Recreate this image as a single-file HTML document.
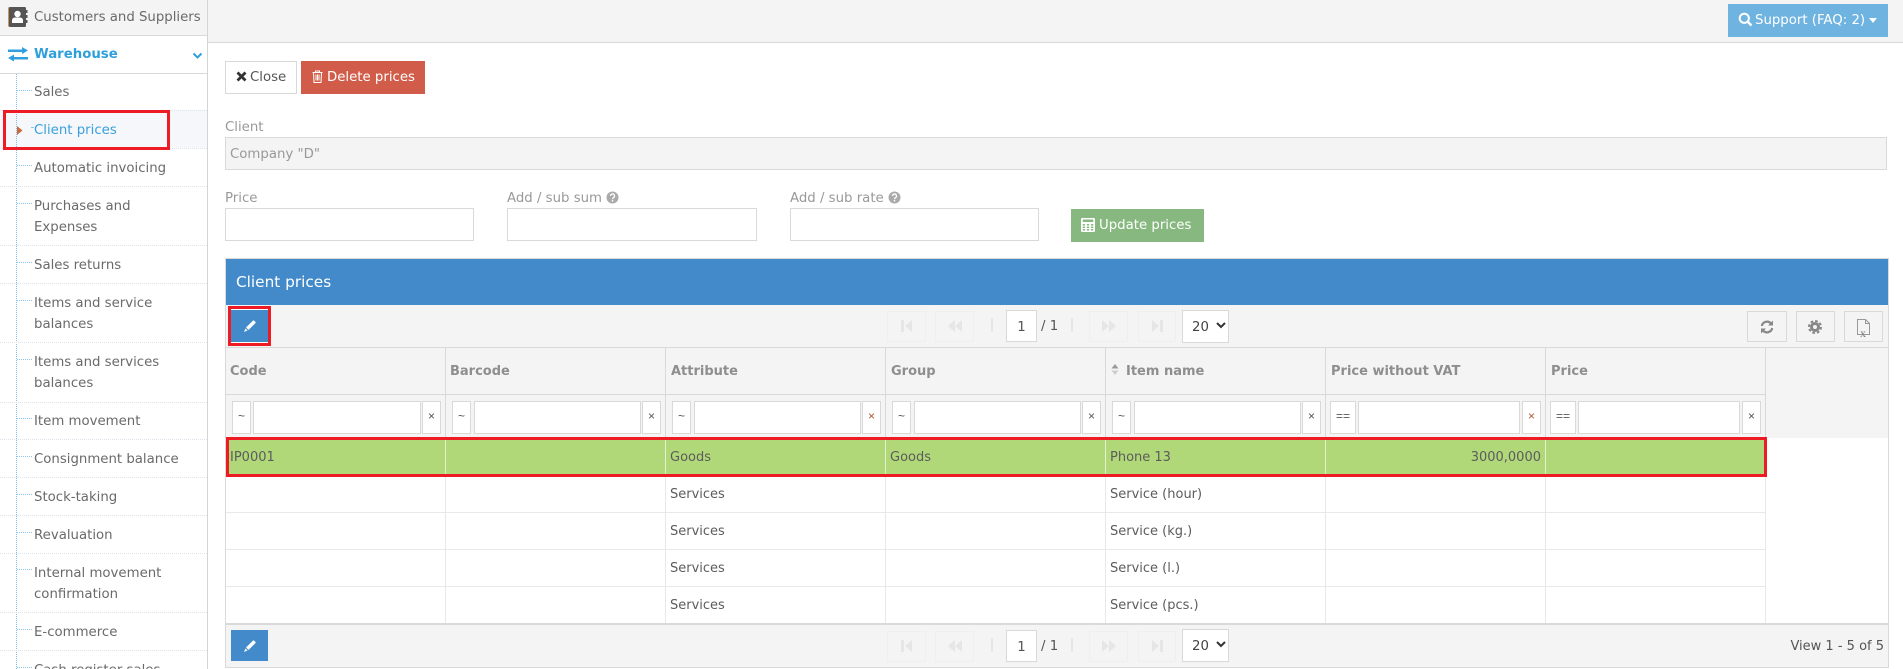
<!DOCTYPE html>
<html><head><meta charset="utf-8"><title>Client prices</title>
<style>
html,body{margin:0;padding:0;width:1903px;height:669px;overflow:hidden;background:#fff}
body{font-family:"DejaVu Sans","Liberation Sans",sans-serif;font-size:13.3px;color:#666;position:relative}
.a,.t,.n,.b,.tick,.row{position:absolute}
.t{white-space:nowrap;line-height:20px;height:20px;margin-top:1px}
.n{left:34px;white-space:nowrap;line-height:20px;height:20px;color:#6a6a6a;margin-top:1px}
.tick{left:17px;width:15px;height:0;border-top:1px dotted #8fc4ea}
.row{left:0;width:207px;height:0;border-top:1px dotted #dde3ea}
.b{box-sizing:border-box;border:1px solid #ddd;background:#fff}
.g{background:#f4f4f4;border-color:#efefef}
.th{position:absolute;top:362px;white-space:nowrap;line-height:20px;font-weight:bold;color:#8e8e8e;font-size:13px}
.c{position:absolute;white-space:nowrap;line-height:20px;color:#5c5c5c;font-size:13px;margin-top:1px}
.f{position:absolute;box-sizing:border-box;top:401px;height:33px;background:#fff;border:1px solid #d9d9d9;text-align:center;line-height:29px;font-size:12px;color:#555;font-family:"Liberation Sans",sans-serif}
.v{position:absolute;width:1px;background:#e8e8e8}
.l{position:absolute;left:226px;width:1540px;height:1px;background:#e9e9e9}
svg{position:absolute;display:block}
</style></head><body>

<!-- sidebar -->
<div class="a" style="left:0;top:0;width:207px;height:35px;background:#f4f4f4"></div>
<div class="a" style="left:0;top:35px;width:207px;height:1px;background:#d9d9d9"></div>
<div class="a" style="left:0;top:73px;width:207px;height:1px;background:#d9d9d9"></div>
<div class="a" style="left:207px;top:0;width:1px;height:669px;background:#d4d4d4"></div>
<div class="a" style="left:0;top:110px;width:207px;height:38px;background:#f5f7fa"></div>
<svg style="left:8px;top:7px" width="20" height="20" viewBox="0 0 20 20"><rect x="0" y="0" width="18" height="20" rx="1.5" fill="#c9965f"/><rect x="1" y="0" width="17" height="20" rx="1.5" fill="#555"/><rect x="18" y="3" width="1.5" height="3" fill="#555"/><rect x="18" y="8" width="1.5" height="3" fill="#555"/><rect x="18" y="13" width="1.5" height="3" fill="#555"/><circle cx="9.5" cy="7" r="3.2" fill="#fff"/><path d="M4 16v-2.5c0-2 1.6-3 3-3h5c1.4 0 3 1 3 3V16z" fill="#fff"/></svg>
<div class="t" style="left:34px;top:7px;color:#6a6a6a">Customers and Suppliers</div>
<svg style="left:8px;top:47px" width="20" height="15" viewBox="0 0 20 15"><path d="M0 2.500h14V0l6 3.500-6 3.500V5H0zM20 10H6V7.500L0 11l6 3.500V12.500h14z" fill="#2f9fe0"/></svg>
<div class="t" style="left:34px;top:44px;color:#2f9fdc;font-weight:bold">Warehouse</div>
<svg style="left:192px;top:52px" width="11" height="8" viewBox="0 0 11 8"><path d="M1.500 1.500L5.500 5.500 9.500 1.500" fill="none" stroke="#2f9fdc" stroke-width="2"/></svg>

<div class="a" style="left:16px;top:74px;width:0;height:595px;border-left:1px dotted #7fbbe8"></div>
<div class="tick" style="top:90px"></div>
<div class="tick" style="top:127px;left:31px;width:2px"></div>
<div class="tick" style="top:165px"></div><div class="tick" style="top:203px"></div>
<div class="tick" style="top:262px"></div><div class="tick" style="top:300px"></div>
<div class="tick" style="top:359px"></div><div class="tick" style="top:418px"></div>
<div class="tick" style="top:456px"></div><div class="tick" style="top:494px"></div>
<div class="tick" style="top:532px"></div><div class="tick" style="top:569px"></div>
<div class="tick" style="top:629px"></div><div class="tick" style="top:667px"></div>
<div class="row" style="top:110px"></div><div class="row" style="top:148px"></div>
<div class="row" style="top:186px"></div><div class="row" style="top:245px"></div>
<div class="row" style="top:283px"></div><div class="row" style="top:342px"></div>
<div class="row" style="top:402px"></div><div class="row" style="top:439px"></div>
<div class="row" style="top:477px"></div><div class="row" style="top:515px"></div>
<div class="row" style="top:553px"></div><div class="row" style="top:612px"></div>
<div class="row" style="top:650px"></div>

<div class="n" style="top:82px">Sales</div>
<div class="n" style="top:120px;color:#3a9fdc">Client prices</div>
<div class="n" style="top:158px">Automatic invoicing</div>
<div class="n" style="top:196px">Purchases and</div>
<div class="n" style="top:217px">Expenses</div>
<div class="n" style="top:255px">Sales returns</div>
<div class="n" style="top:293px">Items and service</div>
<div class="n" style="top:314px">balances</div>
<div class="n" style="top:352px">Items and services</div>
<div class="n" style="top:373px">balances</div>
<div class="n" style="top:411px">Item movement</div>
<div class="n" style="top:449px">Consignment balance</div>
<div class="n" style="top:487px">Stock-taking</div>
<div class="n" style="top:525px">Revaluation</div>
<div class="n" style="top:563px">Internal movement</div>
<div class="n" style="top:584px">confirmation</div>
<div class="n" style="top:622px">E-commerce</div>
<div class="n" style="top:660px">Cash register sales</div>
<svg style="left:17px;top:126px" width="6" height="9" viewBox="0 0 6 9"><path d="M0 0L5.500 4.500 0 9z" fill="#c8693f"/></svg>
<div class="a" style="left:3px;top:110px;width:161px;height:34px;border:3px solid #ed1c24"></div>

<!-- top bar -->
<div class="a" style="left:208px;top:0;width:1695px;height:42px;background:#f4f4f4;border-bottom:1px solid #d9d9d9"></div>
<div class="a" style="left:1728px;top:4px;width:160px;height:33px;background:#6fb3e0"></div>
<svg style="left:1738px;top:12px" width="15" height="15" viewBox="0 0 15 15"><circle cx="6.300" cy="6.300" r="4.600" fill="none" stroke="#fff" stroke-width="2"/><path d="M9.500 9.500L13.500 13.500" stroke="#fff" stroke-width="2.400"/></svg>
<div class="t" style="left:1755px;top:10px;color:#fff">Support (FAQ: 2)</div>
<svg style="left:1869px;top:18px" width="8" height="5" viewBox="0 0 8 5"><path d="M0 0h8L4 5z" fill="#fff"/></svg>

<!-- buttons -->
<div class="b" style="left:225px;top:61px;width:72px;height:33px;border-color:#d9d9d9"></div>
<svg style="left:236px;top:71px" width="11" height="11" viewBox="0 0 11 11"><path d="M1.500 1.500L9.500 9.500M9.500 1.500L1.500 9.500" stroke="#333" stroke-width="2.800"/></svg>
<div class="t" style="left:250px;top:67px;color:#555">Close</div>
<div class="a" style="left:301px;top:61px;width:124px;height:33px;background:#d25c4a"></div>
<svg style="left:312px;top:70px" width="11" height="13" viewBox="0 0 11 13"><path d="M0.500 2.500h10M3.500 2.500V1h4v1.500M1.500 2.500l.5 10h7l.5-10M4 4.500v6M5.500 4.500v6M7 4.500v6" fill="none" stroke="#fff" stroke-width="1"/></svg>
<div class="t" style="left:327px;top:67px;color:#fff">Delete prices</div>

<!-- form -->
<div class="t" style="left:225px;top:117px;color:#999">Client</div>
<div class="b" style="left:225px;top:137px;width:1662px;height:33px;background:#f4f4f4;border-color:#d9d9d9"></div>
<div class="t" style="left:230px;top:144px;color:#999">Company "D"</div>
<div class="t" style="left:225px;top:188px;color:#999">Price</div>
<div class="b" style="left:225px;top:208px;width:249px;height:33px;border-color:#d9d9d9"></div>
<div class="t" style="left:507px;top:188px;color:#999">Add / sub sum</div>
<svg style="left:606px;top:191px" width="13" height="13" viewBox="0 0 13 13"><circle cx="6.500" cy="6.500" r="6" fill="#aaa"/><path d="M4.500 5a2 2 0 1 1 3 1.700c-.7.400-1 .8-1 1.500" fill="none" stroke="#fff" stroke-width="1.300"/><rect x="5.800" y="9" width="1.400" height="1.500" fill="#fff"/></svg>
<div class="b" style="left:507px;top:208px;width:250px;height:33px;border-color:#d9d9d9"></div>
<div class="t" style="left:790px;top:188px;color:#999">Add / sub rate</div>
<svg style="left:888px;top:191px" width="13" height="13" viewBox="0 0 13 13"><circle cx="6.500" cy="6.500" r="6" fill="#aaa"/><path d="M4.500 5a2 2 0 1 1 3 1.700c-.7.400-1 .8-1 1.500" fill="none" stroke="#fff" stroke-width="1.300"/><rect x="5.800" y="9" width="1.400" height="1.500" fill="#fff"/></svg>
<div class="b" style="left:790px;top:208px;width:249px;height:33px;border-color:#d9d9d9"></div>
<div class="a" style="left:1071px;top:209px;width:133px;height:33px;background:#86b87f"></div>
<svg style="left:1081px;top:218px" width="14" height="14" viewBox="0 0 12 14" preserveAspectRatio="none"><rect x="0" y="0" width="12" height="14" rx="1" fill="#fff"/><rect x="1.500" y="1.500" width="9" height="2.500" fill="#86b87f"/><path d="M1.500 6h2v1.500h-2zM5 6h2v1.500H5zM8.500 6h2v1.500h-2zM1.500 8.500h2V10h-2zM5 8.500h2V10H5zM8.500 8.500h2V10h-2zM1.500 11h2v1.500h-2zM5 11h2v1.500H5zM8.500 11h2v1.500h-2z" fill="#86b87f"/></svg>
<div class="t" style="left:1099px;top:215px;color:#fff">Update prices</div>

<!-- panel -->
<div class="a" style="box-sizing:border-box;left:225px;top:258px;width:1664px;height:410px;border:1px solid #d9d9d9;background:#fff"></div>
<div class="a" style="left:226px;top:259px;width:1662px;height:46px;background:#428aca"></div>
<div class="t" style="left:236px;top:271px;color:#fff;font-size:15.3px">Client prices</div>
<div class="a" style="left:226px;top:305px;width:1662px;height:42px;background:#f4f4f4"></div>
<div class="a" style="left:226px;top:347px;width:1662px;height:1px;background:#d9d9d9"></div>
<div class="a" style="left:226px;top:348px;width:1662px;height:90px;background:#f4f4f4"></div>
<div class="a" style="left:226px;top:394px;width:1540px;height:1px;background:#d9d9d9"></div>
<div class="a" style="left:1765px;top:348px;width:1px;height:90px;background:#d9d9d9"></div>

<!-- toolbar button -->
<div class="a" style="left:231px;top:309px;width:37px;height:34px;background:#fff"></div>
<div class="a" style="left:231px;top:310px;width:37px;height:32px;background:#428aca"></div>
<svg style="left:243px;top:319px" width="14" height="14" viewBox="0 0 14 14"><path d="M3 8.500L9.800 1.700a1 1 0 0 1 1.400 0l1.100 1.100a1 1 0 0 1 0 1.400L5.500 11z" fill="#fff"/><path d="M2.500 9.500L4.500 11.500 1 13z" fill="#fff"/></svg>
<div class="a" style="left:228px;top:306px;width:37px;height:34px;border:3px solid #ed1c24"></div>

<!-- pager top -->
<div class="b g" style="left:887px;top:311px;width:39px;height:31px"></div>
<div class="b g" style="left:935px;top:311px;width:39px;height:31px"></div>
<div class="a" style="left:991px;top:318px;width:2px;height:14px;background:#e6e6e6"></div>
<div class="b" style="left:1006px;top:310px;width:31px;height:32px;text-align:center;line-height:33px;color:#555;border-color:#d9d9d9">1</div>
<div class="t" style="left:1041px;top:316px;color:#555">/ 1</div>
<div class="a" style="left:1071px;top:318px;width:2px;height:14px;background:#e6e6e6"></div>
<div class="b g" style="left:1089px;top:311px;width:39px;height:31px"></div>
<div class="b g" style="left:1138px;top:311px;width:38px;height:31px"></div>
<div class="b" style="left:1182px;top:310px;width:47px;height:33px;border-color:#d9d9d9;padding-left:9px;line-height:33px;color:#444">20</div>
<svg style="left:1216px;top:322px" width="10" height="7" viewBox="0 0 10 7"><path d="M1 1l4 4 4-4" fill="none" stroke="#333" stroke-width="2"/></svg>
<svg style="left:900px;top:319px" width="14" height="14" viewBox="0 0 14 14" fill="#e6e6e6"><path d="M1 1h3v12H1zM12 1v12L5 7z"/></svg>
<svg style="left:948px;top:319px" width="14" height="14" viewBox="0 0 14 14" fill="#e6e6e6"><path d="M7 1v12L0 7zM14 1v12L7 7z"/></svg>
<svg style="left:1102px;top:319px" width="14" height="14" viewBox="0 0 14 14" fill="#e6e6e6"><path d="M0 1v12l7-6zM7 1v12l7-6z"/></svg>
<svg style="left:1150px;top:319px" width="14" height="14" viewBox="0 0 14 14" fill="#e6e6e6"><path d="M2 1v12l7-6zM10 1h3v12h-3z"/></svg>

<!-- right tools -->
<div class="b g" style="left:1747px;top:311px;width:40px;height:31px;border-color:#d9d9d9"></div>
<div class="b g" style="left:1796px;top:311px;width:39px;height:31px;border-color:#d9d9d9"></div>
<div class="b g" style="left:1844px;top:311px;width:39px;height:31px;border-color:#d9d9d9"></div>
<svg style="left:1760px;top:320px" width="14" height="14" viewBox="0 0 14 14"><path d="M1.800 6a5.300 5.300 0 0 1 9.200-2.500M12.200 8a5.300 5.300 0 0 1-9.200 2.500" fill="none" stroke="#888" stroke-width="2.200"/><path d="M13 0.500v5H8zM1 13.500v-5h5z" fill="#888"/></svg>
<svg style="left:1808px;top:320px" width="14" height="14" viewBox="0 0 14 14"><circle cx="7" cy="7" r="5" fill="#888"/><circle cx="7" cy="7" r="6" fill="none" stroke="#888" stroke-width="2" stroke-dasharray="2.700 2"/><circle cx="7" cy="7" r="2" fill="#f4f4f4"/></svg>
<svg style="left:1857px;top:319px" width="13" height="16" viewBox="0 0 13 16"><path d="M.5.500h8l4 4v11H.5zM8.500.500v4h4" fill="none" stroke="#999"/></svg>
<div class="t" style="left:1860px;top:322px;font-size:12px;color:#777;font-family:'Liberation Serif',serif">x</div>

<!-- th -->
<div class="v" style="left:225px;top:348px;height:276px;background:#d9d9d9"></div>
<div class="th" style="left:230px">Code</div>
<div class="th" style="left:450px">Barcode</div>
<div class="th" style="left:671px">Attribute</div>
<div class="th" style="left:891px">Group</div>
<svg style="left:1111px;top:364px" width="8" height="12" viewBox="0 0 8 12"><path d="M4 0l3.500 4.500h-7z" fill="#999"/><path d="M4 11l3.500-4.500h-7z" fill="#ccc"/></svg>
<div class="th" style="left:1126px">Item name</div>
<div class="th" style="left:1331px">Price without VAT</div>
<div class="th" style="left:1551px">Price</div>
<div class="v" style="left:445px;top:348px;height:90px;background:#d9d9d9"></div>
<div class="v" style="left:665px;top:348px;height:90px;background:#d9d9d9"></div>
<div class="v" style="left:885px;top:348px;height:90px;background:#d9d9d9"></div>
<div class="v" style="left:1105px;top:348px;height:90px;background:#d9d9d9"></div>
<div class="v" style="left:1325px;top:348px;height:90px;background:#d9d9d9"></div>
<div class="v" style="left:1545px;top:348px;height:90px;background:#d9d9d9"></div>

<!-- filters -->
<div class="f" style="left:232px;width:19px">~</div><div class="f" style="left:253px;width:168px"></div><div class="f" style="left:422px;width:19px">×</div>
<div class="f" style="left:452px;width:19px">~</div><div class="f" style="left:474px;width:167px"></div><div class="f" style="left:642px;width:19px">×</div>
<div class="f" style="left:672px;width:19px">~</div><div class="f" style="left:694px;width:167px"></div><div class="f" style="left:862px;width:19px;color:#b5532f">×</div>
<div class="f" style="left:892px;width:19px">~</div><div class="f" style="left:914px;width:167px"></div><div class="f" style="left:1082px;width:19px">×</div>
<div class="f" style="left:1112px;width:19px">~</div><div class="f" style="left:1134px;width:167px"></div><div class="f" style="left:1302px;width:19px">×</div>
<div class="f" style="left:1330px;width:26px">==</div><div class="f" style="left:1358px;width:162px"></div><div class="f" style="left:1522px;width:19px;color:#b5532f">×</div>
<div class="f" style="left:1550px;width:26px">==</div><div class="f" style="left:1578px;width:162px"></div><div class="f" style="left:1742px;width:19px">×</div>

<!-- rows -->
<div class="a" style="left:226px;top:438px;width:1540px;height:38px;background:#b0d878"></div>
<div class="l" style="top:512px"></div><div class="l" style="top:549px"></div><div class="l" style="top:586px"></div>
<div class="v" style="left:445px;top:476px;height:148px"></div>
<div class="v" style="left:665px;top:476px;height:148px"></div>
<div class="v" style="left:885px;top:476px;height:148px"></div>
<div class="v" style="left:1105px;top:476px;height:148px"></div>
<div class="v" style="left:1325px;top:476px;height:148px"></div>
<div class="v" style="left:1545px;top:476px;height:148px"></div>
<div class="v" style="left:1765px;top:476px;height:148px"></div>
<div class="v" style="left:445px;top:438px;height:38px;background:#e4f0d0"></div>
<div class="v" style="left:665px;top:438px;height:38px;background:#e4f0d0"></div>
<div class="v" style="left:885px;top:438px;height:38px;background:#e4f0d0"></div>
<div class="v" style="left:1105px;top:438px;height:38px;background:#e4f0d0"></div>
<div class="v" style="left:1325px;top:438px;height:38px;background:#e4f0d0"></div>
<div class="v" style="left:1545px;top:438px;height:38px;background:#e4f0d0"></div>
<div class="c" style="left:230px;top:447px">IP0001</div>
<div class="c" style="left:670px;top:447px">Goods</div>
<div class="c" style="left:890px;top:447px">Goods</div>
<div class="c" style="left:1110px;top:447px">Phone 13</div>
<div class="c" style="right:362px;top:447px">3000,0000</div>
<div class="a" style="left:226px;top:437px;width:1535px;height:34px;border:3px solid #ed1c24"></div>
<div class="c" style="left:670px;top:484px">Services</div><div class="c" style="left:1110px;top:484px">Service (hour)</div>
<div class="c" style="left:670px;top:521px">Services</div><div class="c" style="left:1110px;top:521px">Service (kg.)</div>
<div class="c" style="left:670px;top:558px">Services</div><div class="c" style="left:1110px;top:558px">Service (l.)</div>
<div class="c" style="left:670px;top:595px">Services</div><div class="c" style="left:1110px;top:595px">Service (pcs.)</div>

<!-- bottom bar -->
<div class="a" style="left:226px;top:623px;width:1662px;height:2px;background:#d9d9d9"></div>
<div class="a" style="left:226px;top:625px;width:1662px;height:42px;background:#f4f4f4"></div>
<div class="a" style="left:231px;top:630px;width:37px;height:31px;background:#428aca"></div>
<svg style="left:243px;top:639px" width="14" height="14" viewBox="0 0 14 14"><path d="M3 8.500L9.800 1.700a1 1 0 0 1 1.400 0l1.100 1.100a1 1 0 0 1 0 1.400L5.500 11z" fill="#fff"/><path d="M2.500 9.500L4.500 11.500 1 13z" fill="#fff"/></svg>
<div class="b g" style="left:887px;top:631px;width:39px;height:31px"></div>
<div class="b g" style="left:935px;top:631px;width:39px;height:31px"></div>
<div class="a" style="left:991px;top:638px;width:2px;height:14px;background:#e6e6e6"></div>
<div class="b" style="left:1006px;top:630px;width:31px;height:32px;text-align:center;line-height:33px;color:#555;border-color:#d9d9d9">1</div>
<div class="t" style="left:1041px;top:636px;color:#555">/ 1</div>
<div class="a" style="left:1071px;top:638px;width:2px;height:14px;background:#e6e6e6"></div>
<div class="b g" style="left:1089px;top:631px;width:39px;height:31px"></div>
<div class="b g" style="left:1138px;top:631px;width:38px;height:31px"></div>
<div class="b" style="left:1182px;top:629px;width:47px;height:33px;border-color:#d9d9d9;padding-left:9px;line-height:33px;color:#444">20</div>
<svg style="left:1216px;top:641px" width="10" height="7" viewBox="0 0 10 7"><path d="M1 1l4 4 4-4" fill="none" stroke="#333" stroke-width="2"/></svg>
<svg style="left:900px;top:639px" width="14" height="14" viewBox="0 0 14 14" fill="#e6e6e6"><path d="M1 1h3v12H1zM12 1v12L5 7z"/></svg>
<svg style="left:948px;top:639px" width="14" height="14" viewBox="0 0 14 14" fill="#e6e6e6"><path d="M7 1v12L0 7zM14 1v12L7 7z"/></svg>
<svg style="left:1102px;top:639px" width="14" height="14" viewBox="0 0 14 14" fill="#e6e6e6"><path d="M0 1v12l7-6zM7 1v12l7-6z"/></svg>
<svg style="left:1150px;top:639px" width="14" height="14" viewBox="0 0 14 14" fill="#e6e6e6"><path d="M2 1v12l7-6zM10 1h3v12h-3z"/></svg>
<div class="t" style="right:19px;top:636px;color:#555;font-size:13px">View 1 - 5 of 5</div>
</body></html>
